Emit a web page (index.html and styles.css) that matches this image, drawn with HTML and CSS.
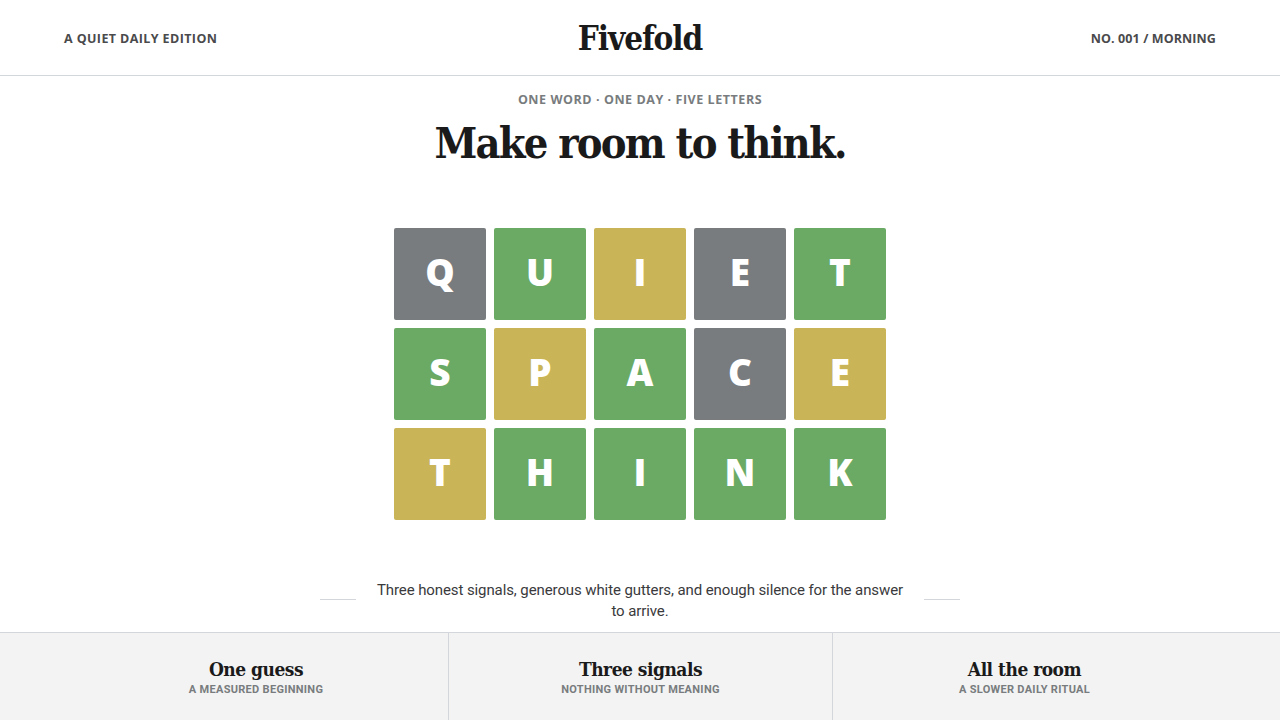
FILE: index.html
```html
<!DOCTYPE html>
<html lang="en">
<head>
<meta charset="utf-8">
<title>Fivefold</title>
<link rel="stylesheet" href="styles.css">
</head>
<body>
<header class="masthead">
  <div class="mast-left">A QUIET DAILY EDITION</div>
  <div class="logo">Fivefold</div>
  <div class="mast-right">NO. 001 / MORNING</div>
</header>
<main class="main">
  <div class="kicker">ONE WORD · ONE DAY · FIVE LETTERS</div>
  <h1 class="headline">Make room to think.</h1>
  <div class="board">
    <div class="tile gray">Q</div>
    <div class="tile green">U</div>
    <div class="tile yellow">I</div>
    <div class="tile gray">E</div>
    <div class="tile green">T</div>
    <div class="tile green">S</div>
    <div class="tile yellow">P</div>
    <div class="tile green">A</div>
    <div class="tile gray">C</div>
    <div class="tile yellow">E</div>
    <div class="tile yellow">T</div>
    <div class="tile green">H</div>
    <div class="tile green">I</div>
    <div class="tile green">N</div>
    <div class="tile green">K</div>
  </div>
  <div class="note">
    <span class="rule"></span>
    <p class="note-text">Three honest signals, generous white gutters, and enough silence for the answer to arrive.</p>
    <span class="rule"></span>
  </div>
</main>
<footer class="strip">
  <div class="cell">
    <div class="cell-title">One guess</div>
    <div class="cell-sub">A MEASURED BEGINNING</div>
  </div>
  <div class="cell divided">
    <div class="cell-title">Three signals</div>
    <div class="cell-sub">NOTHING WITHOUT MEANING</div>
  </div>
  <div class="cell divided">
    <div class="cell-title">All the room</div>
    <div class="cell-sub">A SLOWER DAILY RITUAL</div>
  </div>
</footer>
</body>
</html>
```
FILE: styles.css
```css
* { box-sizing: border-box; }
html, body { margin: 0; padding: 0; }
body {
  background: #ffffff;
  color: #1a1a1b;
  font-family: "Roboto", "Liberation Sans", sans-serif;
  width: 1280px;
  height: 720px;
  overflow: hidden;
}
.masthead {
  height: 76px;
  border-bottom: 1px solid #d3d6da;
  display: grid;
  grid-template-columns: 1fr auto 1fr;
  align-items: center;
  padding: 0 64px;
}
.mast-left, .mast-right {
  font-family: "Open Sans", sans-serif;
  font-weight: 700;
  font-size: 12.5px;
  letter-spacing: 0.4px;
  color: #4a4a4c;
  padding-top: 1px;
}
.mast-right { text-align: right; letter-spacing: 0.1px; }
.logo {
  font-family: "DejaVu Serif Condensed", "DejaVu Serif", serif;
  font-weight: 700;
  font-size: 33px;
  letter-spacing: -1.1px;
  color: #1a1a1b;
  padding-top: 2px;
}
.main {
  display: flex;
  flex-direction: column;
  align-items: center;
  padding-top: 16px;
  height: 556px;
}
.kicker {
  font-family: "Open Sans", sans-serif;
  font-weight: 700;
  font-size: 12.5px;
  letter-spacing: 0.55px;
  color: #787c7e;
  line-height: 16px;
}
.headline {
  margin: 9px 0 0;
  font-family: "DejaVu Serif Condensed", "DejaVu Serif", serif;
  font-weight: 700;
  font-size: 43px;
  letter-spacing: -1.8px;
  line-height: 52px;
  color: #1a1a1b;
}
.board {
  margin-top: 59px;
  display: grid;
  grid-template-columns: repeat(5, 92px);
  grid-auto-rows: 92px;
  gap: 8px;
}
.tile {
  border-radius: 2px;
  display: flex;
  align-items: center;
  justify-content: center;
  padding-bottom: 6px;
  color: #ffffff;
  font-family: "Open Sans", sans-serif;
  font-weight: 800;
  font-size: 37px;
}
.gray { background: #787c7e; }
.green { background: #6aaa64; }
.yellow { background: #c9b458; }
.note {
  margin-top: 60px;
  display: flex;
  align-items: center;
  gap: 20px;
}
.rule {
  width: 36px;
  height: 1px;
  margin-bottom: 4px;
  background: #d3d6da;
}
.note-text {
  margin: 0;
  width: 528px;
  text-align: center;
  font-family: "Roboto", sans-serif;
  font-size: 15px;
  letter-spacing: -0.1px;
  line-height: 21px;
  color: #3a3a3c;
}
.strip {
  height: 88px;
  border-top: 1px solid #d3d6da;
  background: #f3f3f3;
  display: grid;
  grid-template-columns: repeat(3, 1fr);
  padding: 0 64px;
}
.cell {
  display: flex;
  flex-direction: column;
  align-items: center;
  padding-top: 24px;
}
.divided {
  border-left: 1px solid #d3d6da;
}
.cell-title {
  font-family: "DejaVu Serif Condensed", "DejaVu Serif", serif;
  font-weight: 700;
  font-size: 19px;
  letter-spacing: -0.5px;
  line-height: 24px;
  color: #1a1a1b;
}
.cell-sub {
  font-family: "Roboto", sans-serif;
  font-weight: 700;
  font-size: 11px;
  letter-spacing: 0.3px;
  line-height: 14px;
  margin-top: 2px;
  color: #787c7e;
}
```
